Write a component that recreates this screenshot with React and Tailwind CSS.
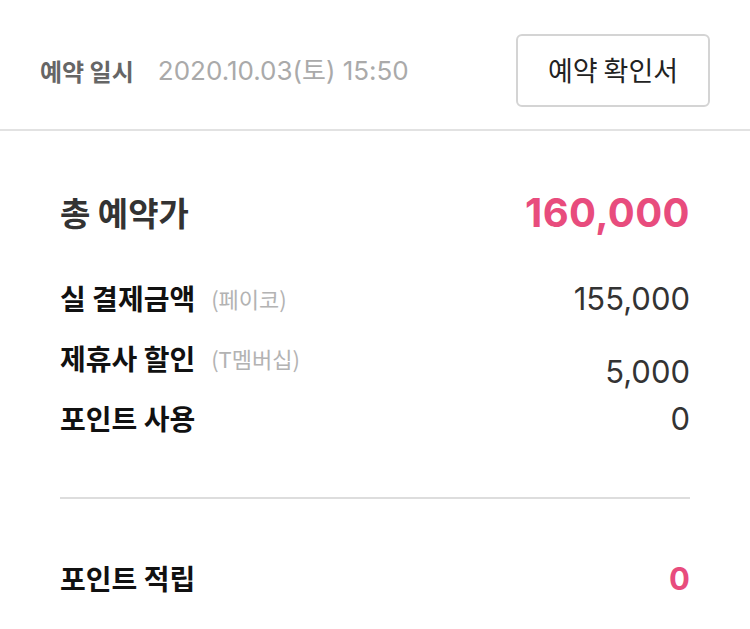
// Reservation payment summary

const KR = "font-['Noto_Sans_CJK_KR','Noto_Sans',sans-serif]";
const NUM = "font-['Inter','Noto_Sans_CJK_KR',sans-serif]";

function Row({ label, sub, value, valueClass = '', className = '' }) {
  return (
    <div className={`flex h-[60px] items-center justify-between ${className}`}>
      <div className="flex items-center gap-4">
        <span className="text-[28px] font-bold leading-none text-[#111]">{label}</span>
        {sub && <span className="text-[22px] leading-none text-[#b3b3b3]">{sub}</span>}
      </div>
      <span className={`${NUM} text-[31px] leading-none text-[#333] ${valueClass}`}>{value}</span>
    </div>
  );
}

export default function App() {
  return (
    <div className={`${KR} h-[629px] w-[750px] bg-white`}>
      {/* Header */}
      <div className="flex h-[131px] items-start justify-between border-b-2 border-[#e2e2e2] px-10 pt-[34px]">
        <div className="flex h-[73px] items-center gap-6">
          <span className="text-[24px] font-bold text-[#666]">예약 일시</span>
          <span className={`${NUM} text-[26px] text-[#aaa]`}>2020.10.03(토) 15:50</span>
        </div>
        <button className="h-[73px] w-[194px] rounded-md border-2 border-[#d4d4d4] text-[27px] text-[#222]">
          예약 확인서
        </button>
      </div>

      {/* Summary */}
      <div className="px-[60px]">
        <div className="mt-[52px] flex h-[60px] items-center justify-between">
          <span className="text-[33px] font-bold text-[#333]">총 예약가</span>
          <span className={`${NUM} text-[40px] font-bold tracking-[0.01em] text-[#e84c7d]`}>160,000</span>
        </div>
        <Row className="mt-[25px]" label="실 결제금액" sub="(페이코)" value="155,000" />
        <Row label="제휴사 할인" sub="(T멤버십)" value="5,000" valueClass="mt-[26px]" />
        <Row label="포인트 사용" value="0" />

        <div className="mt-[49px] h-[2px] bg-[#dddddd]" />

        <Row className="mt-[49px]" label="포인트 적립" value="0" valueClass="font-bold text-[#e84c7d]" />
      </div>
    </div>
  );
}
